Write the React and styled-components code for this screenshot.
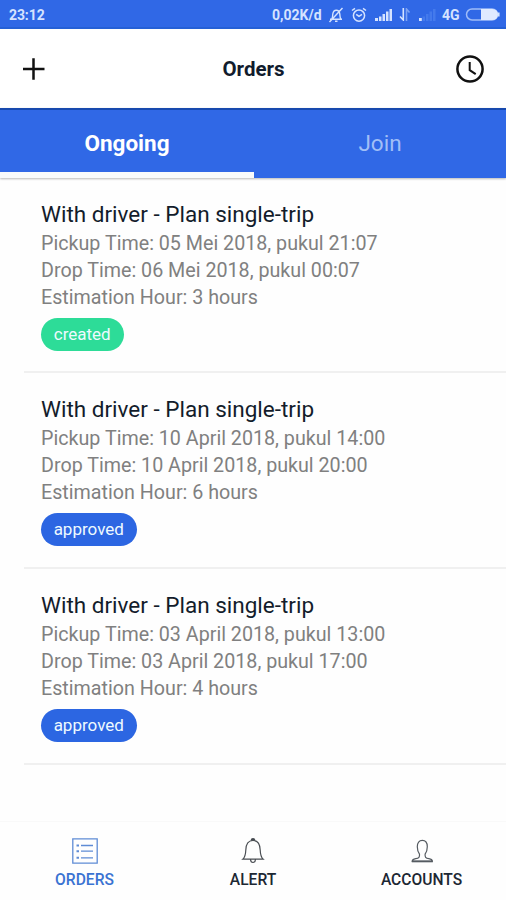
import React from "react";
import styled, { createGlobalStyle } from "styled-components";

const GlobalStyle = createGlobalStyle`
  * { box-sizing: border-box; }
  body { margin: 0; background: #fefefe; }
`;

const Screen = styled.div`
  display: flex;
  flex-direction: column;
  width: 506px;
  height: 900px;
  overflow: hidden;
  background: #fefefe;
  font-family: Roboto, "Liberation Sans", sans-serif;
  white-space: nowrap;
`;

const StatusBar = styled.div`
  display: flex;
  flex: none;
  align-items: center;
  justify-content: space-between;
  height: 29px;
  padding: 2px 6px 0 9px;
  background: #3068e6;
  border-bottom: 2px solid #2560d6;
  color: #d5e3ff;
  font-size: 14px;
  font-weight: 700;
`;

const Time = styled.span`
  letter-spacing: -0.1px;
`;

const StatusRight = styled.div`
  display: flex;
  align-items: center;
`;

const Rate = styled.span`
  width: 50px;
  margin-right: 6px;
  font-size: 14px;
`;

const Network = styled.span`
  width: 18px;
  margin-right: 5px;
  font-size: 14px;
`;

const StatusIcon = styled.svg`
  display: block;
  flex: none;
  margin-right: ${(p) => p.$gap || 0}px;
`;

const Header = styled.header`
  display: grid;
  flex: none;
  grid-template-columns: 1fr auto 1fr;
  align-items: center;
  height: 79px;
  padding: 0 21px 0 22px;
  background: #fff;

  svg { display: block; }
  svg:last-child { justify-self: end; }
`;

const Title = styled.h1`
  margin: 1px 0 0;
  color: #111c2d;
  font-size: 20.5px;
  font-weight: 700;
`;

const Tabs = styled.div`
  display: flex;
  flex: none;
  height: 70px;
  background: #3068e6;
  border-top: 2px solid #1749ae;
  box-shadow: 0 1px 2px rgba(0, 0, 0, 0.28);
`;

const Tab = styled.div`
  flex: none;
  width: ${(p) => (p.$active ? 254 : 252)}px;
  height: 68px;
  padding-top: 18px;
  border-bottom: ${(p) => (p.$active ? "6px solid #f8fafb" : "0")};
  color: ${(p) => (p.$active ? "#fff" : "#a1bff7")};
  font-size: 22.5px;
  font-weight: ${(p) => (p.$active ? 700 : 400)};
  line-height: 30px;
  text-align: center;
`;

const List = styled.main`
  flex: 1;
  padding-left: 24px;
`;

const Order = styled.article`
  height: 196px;
  padding: 22px 0 0 17px;
  border-bottom: 2px solid #f0f0f0;

  &:first-child {
    height: 195px;
  }
`;

const OrderTitle = styled.h2`
  margin: 0;
  color: #131c2b;
  font-size: 22.5px;
  font-weight: 400;
  line-height: 29px;
`;

const Details = styled.div`
  padding-top: 2px;
  color: #808080;
  font-size: 19.7px;
  line-height: 26.8px;
`;

const Detail = styled.p`
  margin: 0;
`;

const Badge = styled.span`
  display: block;
  width: ${(p) => (p.$status === "created" ? 82.5 : 95.5)}px;
  height: 33.5px;
  margin-top: 6.6px;
  border-radius: 17px;
  background: ${(p) => (p.$status === "created" ? "#2ddc98" : "#2c66e2")};
  color: #eefaff;
  font-size: 17px;
  line-height: 33px;
  text-align: center;
`;

const BottomNav = styled.nav`
  display: grid;
  flex: none;
  grid-template-columns: 169px 168px 169px;
  height: 79px;
  padding-top: 15px;
  background: #fefefe;
  border-top: 1px solid #f9f9f9;
`;

const NavItem = styled.div`
  display: flex;
  flex-direction: column;
  align-items: center;
  color: ${(p) => (p.$active ? "#3a73d2" : "#1c2733")};
  font-size: 15.6px;
  font-weight: 500;
  line-height: 20px;

  svg { display: block; margin-bottom: 5px; }
`;

const orders = [
  { pickup: "05 Mei 2018, pukul 21:07", drop: "06 Mei 2018, pukul 00:07", hours: 3, status: "created" },
  { pickup: "10 April 2018, pukul 14:00", drop: "10 April 2018, pukul 20:00", hours: 6, status: "approved" },
  { pickup: "03 April 2018, pukul 13:00", drop: "03 April 2018, pukul 17:00", hours: 4, status: "approved" },
];

const MutedIcon = () => (
  <StatusIcon width="16" height="16" viewBox="0 0 16 16" fill="none" stroke="#d5e3ff" strokeWidth="1.4" $gap={7}>
    <path d="M2 12.2h12M3.8 12c1-1.5.7-3 1-5C5.2 4.500 6.500 3.200 8.300 3.200s3.200 1.300 3.500 3.800c.2 2 .1 3.500 1 5M7 14.200h2.500M14.500 1L1.500 15" />
  </StatusIcon>
);

const AlarmIcon = () => (
  <StatusIcon width="16" height="16" viewBox="0 0 16 16" fill="none" stroke="#d5e3ff" strokeWidth="1.500" $gap={8}>
    <circle cx="8" cy="8.600" r="5.600" />
    <path d="M1 3.500L4 1.300M15 3.500L12 1.300M5.200 7.300L8 9.400l3-2" />
  </StatusIcon>
);

const SignalIcon = () => (
  <StatusIcon width="18" height="13" viewBox="0 0 18 13" fill="#d5e3ff" $gap={6}>
    <path d="M0 10h3v3H0zM4 8.500h2.500V13H4zM7.500 6H10v7H7.500zM11 3.500h2.500V13H11zM14.500 1H17v12h-2.500z" />
  </StatusIcon>
);

const DataIcon = () => (
  <StatusIcon width="12" height="13" viewBox="0 0 12 13" fill="none" strokeWidth="1.600" $gap={8}>
    <path d="M4.300 0v12L1 8.500" stroke="#d5e3ff" />
    <path d="M7.500 13V1l3 3.500" stroke="#7fa4f3" />
  </StatusIcon>
);

const WeakSignalIcon = () => (
  <StatusIcon width="17" height="13" viewBox="0 0 17 13" fill="#447aec" $gap={6}>
    <path d="M0 10h2.800v3H0z" fill="#d5e3ff" />
    <path d="M3.500 8.500H6V13H3.500zM7 6h2.500v7H7zM10.500 3.500H13V13h-2.500zM14 1h2.500v12H14z" />
  </StatusIcon>
);

const BatteryIcon = () => (
  <StatusIcon width="35" height="13" viewBox="0 0 35 13">
    <path d="M7 1h20a5.500 5.500 0 0 1 0 11H7A5.500 5.500 0 0 1 7 1z" fill="none" stroke="#9fbcf8" strokeWidth="1.500" />
    <path d="M16 1h11.500a5.500 5.500 0 0 1 0 11H16z" fill="#e0eaff" />
    <path d="M33.800 4.500v4" stroke="#d5e3ff" strokeWidth="1.600" />
  </StatusIcon>
);

const PlusIcon = () => (
  <svg width="24" height="24" viewBox="0 0 24 24" stroke="#111" strokeWidth="2.500">
    <path d="M1 12h21.500M11.500 1.200v21.500" />
  </svg>
);

const ClockIcon = () => (
  <svg width="30" height="30" viewBox="0 0 30 30" fill="none" stroke="#111">
    <circle cx="15" cy="15" r="12.600" strokeWidth="2.500" />
    <path d="M14.700 8v8.200l6 4" strokeWidth="2" />
  </svg>
);

const ListIcon = () => (
  <svg width="28" height="28" viewBox="0 0 28 28" fill="none" stroke="#5f8cd5" strokeWidth="1.300">
    <path d="M1.800 1.800h24.400v24.400H1.800zM10 8.500h12M10 14.200h12M10 20.800h12" />
    <path d="M5.500 8.500h2.500M5.500 14.200h2.500M5.500 20.800h2.500" strokeWidth="2" />
  </svg>
);

const BellIcon = () => (
  <svg width="28" height="28" viewBox="0 0 28 28" fill="none" stroke="#4a4e53" strokeWidth="1.200">
    <path d="M3.800 22.200c2-1.700 2.800-3.700 3-9.200.2-6.200 2.700-9.500 7.200-9.500s7 3.300 7.200 9.500c.2 5.500 1 7.500 3 9.200zM11.500 22.500c.3 4 4.700 4 5 0" />
    <path d="M12.200 3.200c.2-2 3.400-2 3.600 0z" fill="#1c2733" />
  </svg>
);

const PersonIcon = () => (
  <svg width="28" height="28" viewBox="0 0 28 28" fill="none" stroke="#555b61" strokeWidth="1.200">
    <path d="M4.200 24.200c.2-1.800 1.500-2.200 3.500-2.500 3.400-.5 4-1.500 3.800-4.500-1.700-2.500-2.200-4.500-2.200-7.500 0-4 1.800-6.300 5-6.300s5 2.300 5 6.300c0 3-.5 5-2.200 7.500-.2 3 .4 4 3.800 4.500 2 .3 3.300.7 3.500 2.500z" />
    <path d="M3.800 24.500h21" strokeWidth="1.600" />
  </svg>
);

export default function App() {
  return (
    <Screen>
      <GlobalStyle />
      <StatusBar>
        <Time>23:12</Time>
        <StatusRight>
          <Rate>0,02K/d</Rate>
          <MutedIcon />
          <AlarmIcon />
          <SignalIcon />
          <DataIcon />
          <WeakSignalIcon />
          <Network>4G</Network>
          <BatteryIcon />
        </StatusRight>
      </StatusBar>
      <Header>
        <PlusIcon />
        <Title>Orders</Title>
        <ClockIcon />
      </Header>
      <Tabs>
        <Tab $active>Ongoing</Tab>
        <Tab>Join</Tab>
      </Tabs>
      <List>
        {orders.map((order) => (
          <Order key={order.pickup}>
            <OrderTitle>With driver - Plan single-trip</OrderTitle>
            <Details>
              <Detail>Pickup Time: {order.pickup}</Detail>
              <Detail>Drop Time: {order.drop}</Detail>
              <Detail>Estimation Hour: {order.hours} hours</Detail>
            </Details>
            <Badge $status={order.status}>{order.status}</Badge>
          </Order>
        ))}
      </List>
      <BottomNav>
        <NavItem $active><ListIcon />ORDERS</NavItem>
        <NavItem><BellIcon />ALERT</NavItem>
        <NavItem><PersonIcon />ACCOUNTS</NavItem>
      </BottomNav>
    </Screen>
  );
}
